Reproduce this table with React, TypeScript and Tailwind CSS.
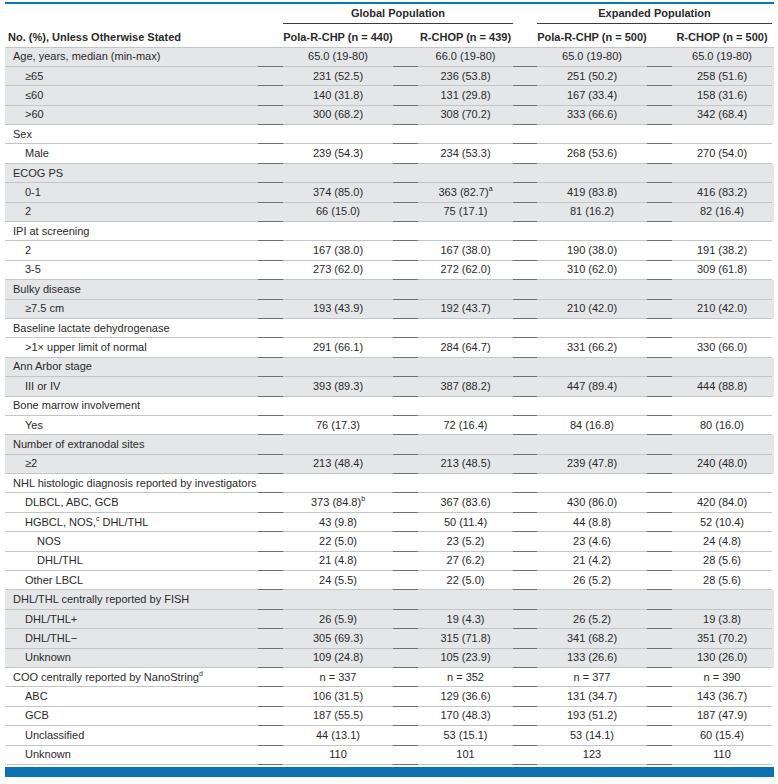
import React from 'react';

type Row = { label: React.ReactNode; indent?: number; values?: React.ReactNode[] };
type Group = { shaded: boolean; rows: Row[] };

const Sup = ({ children }: { children: React.ReactNode }) => (
  <sup className="text-[7px] align-super">{children}</sup>
);

const groups: Group[] = [
  {
    shaded: true,
    rows: [
      { label: 'Age, years, median (min-max)', values: ['65.0 (19-80)', '66.0 (19-80)', '65.0 (19-80)', '65.0 (19-80)'] },
      { label: '≥65', indent: 1, values: ['231 (52.5)', '236 (53.8)', '251 (50.2)', '258 (51.6)'] },
      { label: '≤60', indent: 1, values: ['140 (31.8)', '131 (29.8)', '167 (33.4)', '158 (31.6)'] },
      { label: '>60', indent: 1, values: ['300 (68.2)', '308 (70.2)', '333 (66.6)', '342 (68.4)'] },
    ],
  },
  {
    shaded: false,
    rows: [
      { label: 'Sex' },
      { label: 'Male', indent: 1, values: ['239 (54.3)', '234 (53.3)', '268 (53.6)', '270 (54.0)'] },
    ],
  },
  {
    shaded: true,
    rows: [
      { label: 'ECOG PS' },
      { label: '0-1', indent: 1, values: ['374 (85.0)', <>363 (82.7)<Sup>a</Sup></>, '419 (83.8)', '416 (83.2)'] },
      { label: '2', indent: 1, values: ['66 (15.0)', '75 (17.1)', '81 (16.2)', '82 (16.4)'] },
    ],
  },
  {
    shaded: false,
    rows: [
      { label: 'IPI at screening' },
      { label: '2', indent: 1, values: ['167 (38.0)', '167 (38.0)', '190 (38.0)', '191 (38.2)'] },
      { label: '3-5', indent: 1, values: ['273 (62.0)', '272 (62.0)', '310 (62.0)', '309 (61.8)'] },
    ],
  },
  {
    shaded: true,
    rows: [
      { label: 'Bulky disease' },
      { label: '≥7.5 cm', indent: 1, values: ['193 (43.9)', '192 (43.7)', '210 (42.0)', '210 (42.0)'] },
    ],
  },
  {
    shaded: false,
    rows: [
      { label: 'Baseline lactate dehydrogenase' },
      { label: '>1× upper limit of normal', indent: 1, values: ['291 (66.1)', '284 (64.7)', '331 (66.2)', '330 (66.0)'] },
    ],
  },
  {
    shaded: true,
    rows: [
      { label: 'Ann Arbor stage' },
      { label: 'III or IV', indent: 1, values: ['393 (89.3)', '387 (88.2)', '447 (89.4)', '444 (88.8)'] },
    ],
  },
  {
    shaded: false,
    rows: [
      { label: 'Bone marrow involvement' },
      { label: 'Yes', indent: 1, values: ['76 (17.3)', '72 (16.4)', '84 (16.8)', '80 (16.0)'] },
    ],
  },
  {
    shaded: true,
    rows: [
      { label: 'Number of extranodal sites' },
      { label: '≥2', indent: 1, values: ['213 (48.4)', '213 (48.5)', '239 (47.8)', '240 (48.0)'] },
    ],
  },
  {
    shaded: false,
    rows: [
      { label: 'NHL histologic diagnosis reported by investigators' },
      { label: 'DLBCL, ABC, GCB', indent: 1, values: [<>373 (84.8)<Sup>b</Sup></>, '367 (83.6)', '430 (86.0)', '420 (84.0)'] },
      { label: <>HGBCL, NOS,<Sup>c</Sup>&nbsp;DHL/THL</>, indent: 1, values: ['43 (9.8)', '50 (11.4)', '44 (8.8)', '52 (10.4)'] },
      { label: 'NOS', indent: 2, values: ['22 (5.0)', '23 (5.2)', '23 (4.6)', '24 (4.8)'] },
      { label: 'DHL/THL', indent: 2, values: ['21 (4.8)', '27 (6.2)', '21 (4.2)', '28 (5.6)'] },
      { label: 'Other LBCL', indent: 1, values: ['24 (5.5)', '22 (5.0)', '26 (5.2)', '28 (5.6)'] },
    ],
  },
  {
    shaded: true,
    rows: [
      { label: 'DHL/THL centrally reported by FISH' },
      { label: 'DHL/THL+', indent: 1, values: ['26 (5.9)', '19 (4.3)', '26 (5.2)', '19 (3.8)'] },
      { label: 'DHL/THL−', indent: 1, values: ['305 (69.3)', '315 (71.8)', '341 (68.2)', '351 (70.2)'] },
      { label: 'Unknown', indent: 1, values: ['109 (24.8)', '105 (23.9)', '133 (26.6)', '130 (26.0)'] },
    ],
  },
  {
    shaded: false,
    rows: [
      { label: <>COO centrally reported by NanoString<Sup>d</Sup></>, values: ['n = 337', 'n = 352', 'n = 377', 'n = 390'] },
      { label: 'ABC', indent: 1, values: ['106 (31.5)', '129 (36.6)', '131 (34.7)', '143 (36.7)'] },
      { label: 'GCB', indent: 1, values: ['187 (55.5)', '170 (48.3)', '193 (51.2)', '187 (47.9)'] },
      { label: 'Unclassified', indent: 1, values: ['44 (13.1)', '53 (15.1)', '53 (14.1)', '60 (15.4)'] },
      { label: 'Unknown', indent: 1, values: ['110', '101', '123', '110'] },
    ],
  },
];

const cols = 'grid grid-cols-[253px_25px_110px_25px_95px_24px_110px_25px_100px]';

function DataRow({ row, shaded }: { row: Row; shaded: boolean }) {
  const pad = row.indent === 2 ? 'pl-[32px]' : row.indent === 1 ? 'pl-[20px]' : 'pl-[8px]';
  const v = row.values ?? ['', '', '', ''];
  const cell = 'flex items-center justify-center whitespace-nowrap border-b border-[#c4c5c6]';
  const gap = 'border-b border-[#707070]';
  return (
    <div className={`${cols} h-[19.4px] ${shaded ? 'bg-[#e5e6e7]' : 'bg-white'}`}>
      <div className={`flex items-center whitespace-nowrap border-b border-[#c4c5c6] ${pad}`}>{row.label}</div>
      <div className={gap} />
      <div className={cell}>{v[0]}</div>
      <div className={gap} />
      <div className={cell}>{v[1]}</div>
      <div className={gap} />
      <div className={cell}>{v[2]}</div>
      <div className={gap} />
      <div className={cell}>{v[3]}</div>
    </div>
  );
}

export default function App() {
  return (
    <div className="bg-white w-[778px] h-[784px] pt-[2px] font-['Liberation_Sans',Arial,sans-serif] text-[11px] leading-none text-[#2a2a2a]">
      <div className="mx-[5px] w-[769px]">
        <div className="h-[1.5px] bg-[#0a78b8]" />

        {/* header */}
        <div className={`${cols} h-[20px] font-bold`}>
          <div />
          <div />
          <div className="col-span-3 flex items-center justify-center border-b border-[#3c3c3c]">Global Population</div>
          <div />
          <div className="col-span-3 flex items-center justify-center border-b border-[#3c3c3c]">Expanded Population</div>
        </div>
        <div className={`${cols} h-[24px] pt-[5px] font-bold border-b border-[#c4c5c6]`}>
          <div className="flex items-center pl-[3px]">No. (%), Unless Otherwise Stated</div>
          <div />
          <div className="flex items-center justify-center whitespace-nowrap">Pola-R-CHP (n = 440)</div>
          <div />
          <div className="flex items-center justify-center whitespace-nowrap">R-CHOP (n = 439)</div>
          <div />
          <div className="flex items-center justify-center whitespace-nowrap">Pola-R-CHP (n = 500)</div>
          <div />
          <div className="flex items-center justify-center whitespace-nowrap">R-CHOP (n = 500)</div>
        </div>

        {groups.map((g, gi) =>
          g.rows.map((r, ri) => <DataRow key={`${gi}-${ri}`} row={r} shaded={g.shaded} />)
        )}

        <div className="mt-[2px] h-[10px] bg-[#0a72b2]" />
      </div>
    </div>
  );
}
